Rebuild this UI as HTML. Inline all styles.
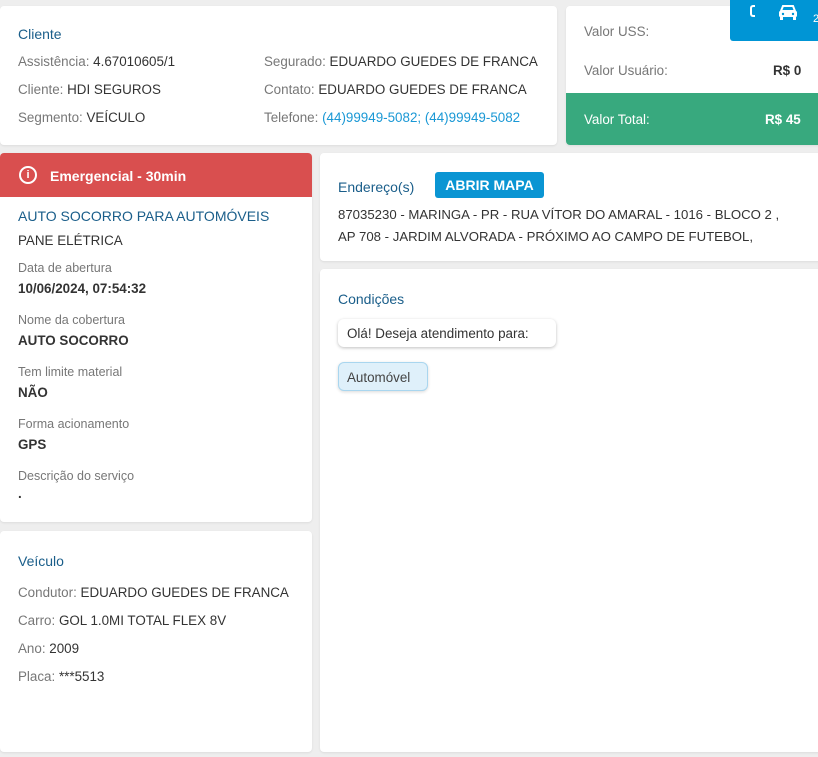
<!DOCTYPE html>
<html><head><meta charset="utf-8"><style>
*{box-sizing:border-box;margin:0;padding:0}
body{width:818px;height:757px;background:#eeeeee;font-family:"Liberation Sans",sans-serif;font-size:13.4px;color:#333;position:relative;overflow:hidden}
.card{position:absolute;background:#fff;border-radius:4px;box-shadow:0 1px 2px rgba(0,0,0,.08)}
.t{position:absolute;white-space:nowrap;margin-top:1px}
.h{color:#1a5e8a;font-size:14px}
.l{color:#777}
.s{color:#777;font-size:12.5px}
.b{font-weight:bold;color:#333}
</style></head><body>
<div class="card" style="left:0;top:6px;width:557px;height:139px">
 <div class="t h" style="left:18px;top:19px">Cliente</div>
 <div class="t" style="left:18px;top:47px"><span class="l">Assistência:</span> 4.67010605/1</div>
 <div class="t" style="left:18px;top:75px"><span class="l">Cliente:</span> HDI SEGUROS</div>
 <div class="t" style="left:18px;top:103px"><span class="l">Segmento:</span> VEÍCULO</div>
 <div class="t" style="left:264px;top:47px"><span class="l">Segurado:</span> EDUARDO GUEDES DE FRANCA</div>
 <div class="t" style="left:264px;top:75px"><span class="l">Contato:</span> EDUARDO GUEDES DE FRANCA</div>
 <div class="t" style="left:264px;top:103px"><span class="l">Telefone:</span> <span style="color:#1a98d5">(44)99949-5082; (44)99949-5082</span></div>
</div>
<div class="card" style="left:566px;top:6px;width:260px;height:139px;overflow:hidden">
 <div class="t l" style="left:18px;top:17px">Valor USS:</div>
 <div class="t l" style="left:18px;top:56px">Valor Usuário:</div>
 <div class="t b" style="left:207px;top:56px">R$ 0</div>
 <div style="position:absolute;left:0;top:87px;width:260px;height:52px;background:#38a97e"></div>
 <div class="t" style="left:18px;top:105px;color:#fff">Valor Total:</div>
 <div class="t" style="left:199px;top:105px;color:#fff;font-weight:bold">R$ 45</div>
</div>
<div style="position:absolute;left:730px;top:0;width:88px;height:41px;background:#0095d5;border-radius:0 0 0 3px">
 <svg style="position:absolute;left:47px;top:4px" width="22" height="16" viewBox="0 0 22 16"><path d="M4 7 L6 2 H16 L18 7 Z" fill="none" stroke="#fff" stroke-width="2"/><rect x="2" y="7" width="18" height="6" rx="1.5" fill="#fff"/><rect x="3" y="13" width="3" height="3" fill="#fff"/><rect x="16" y="13" width="3" height="3" fill="#fff"/><circle cx="6" cy="10" r="1.2" fill="#0095d5"/><circle cx="16" cy="10" r="1.2" fill="#0095d5"/></svg>
 <div style="position:absolute;left:20px;top:5px;width:5px;height:12px;border:2px solid #fff;border-right:none;border-radius:3px 0 0 3px"></div>
 <div class="t" style="left:83px;top:12px;color:#fff;font-size:11px">2</div>
</div>
<div class="card" style="left:0;top:153px;width:312px;height:369px;overflow:hidden">
 <div style="position:absolute;left:0;top:0;width:312px;height:44px;background:#d94f4f"></div>
 <div style="position:absolute;left:19px;top:13px;width:18px;height:18px;border:2px solid #fff;border-radius:50%;color:#fff;font-size:11px;font-weight:bold;text-align:center;line-height:14px">i</div>
 <div class="t" style="left:50px;top:14px;color:#fff;font-weight:bold;font-size:14px">Emergencial - 30min</div>
 <div class="t h" style="left:18px;top:54px">AUTO SOCORRO PARA AUTOMÓVEIS</div>
 <div class="t" style="left:18px;top:79px">PANE ELÉTRICA</div>
 <div class="t s" style="left:18px;top:107px">Data de abertura</div>
 <div class="t b" style="left:18px;top:127px">10/06/2024, 07:54:32</div>
 <div class="t s" style="left:18px;top:159px">Nome da cobertura</div>
 <div class="t b" style="left:18px;top:179px">AUTO SOCORRO</div>
 <div class="t s" style="left:18px;top:211px">Tem limite material</div>
 <div class="t b" style="left:18px;top:231px">NÃO</div>
 <div class="t s" style="left:18px;top:263px">Forma acionamento</div>
 <div class="t b" style="left:18px;top:283px">GPS</div>
 <div class="t s" style="left:18px;top:315px">Descrição do serviço</div>
 <div class="t b" style="left:18px;top:332px">.</div>
</div>
<div class="card" style="left:0;top:531px;width:312px;height:221px">
 <div class="t h" style="left:18px;top:21px">Veículo</div>
 <div class="t" style="left:18px;top:53px"><span class="l">Condutor:</span> EDUARDO GUEDES DE FRANCA</div>
 <div class="t" style="left:18px;top:81px"><span class="l">Carro:</span> GOL 1.0MI TOTAL FLEX 8V</div>
 <div class="t" style="left:18px;top:109px"><span class="l">Ano:</span> 2009</div>
 <div class="t" style="left:18px;top:137px"><span class="l">Placa:</span> ***5513</div>
</div>
<div class="card" style="left:320px;top:153px;width:510px;height:108px">
 <div class="t h" style="left:18px;top:25px">Endereço(s)</div>
 <div style="position:absolute;left:115px;top:19px;width:109px;height:26px;background:#0a95d3;border-radius:3px;color:#fff;font-weight:bold;font-size:14px;text-align:center;line-height:26px">ABRIR MAPA</div>
 <div class="t" style="left:18px;top:53px;font-size:13.2px">87035230 - MARINGA - PR - RUA VÍTOR DO AMARAL - 1016 - BLOCO 2 ,</div>
 <div class="t" style="left:18px;top:75px;font-size:13.2px">AP 708 - JARDIM ALVORADA - PRÓXIMO AO CAMPO DE FUTEBOL,</div>
</div>
<div class="card" style="left:320px;top:269px;width:510px;height:483px">
 <div class="t h" style="left:18px;top:21px">Condições</div>
 <div style="position:absolute;left:18px;top:50px;width:218px;height:28px;border-radius:6px;box-shadow:0 1px 3px rgba(0,0,0,.25);line-height:30px;padding-left:9px;white-space:nowrap">Olá! Deseja atendimento para:</div>
 <div style="position:absolute;left:18px;top:93px;width:90px;height:29px;border-radius:6px;background:#dff0fa;border:1px solid #a9d6ef;box-shadow:0 1px 3px rgba(0,0,0,.15);line-height:29px;padding-left:8px;color:#444">Automóvel</div>
</div>
</body></html>
